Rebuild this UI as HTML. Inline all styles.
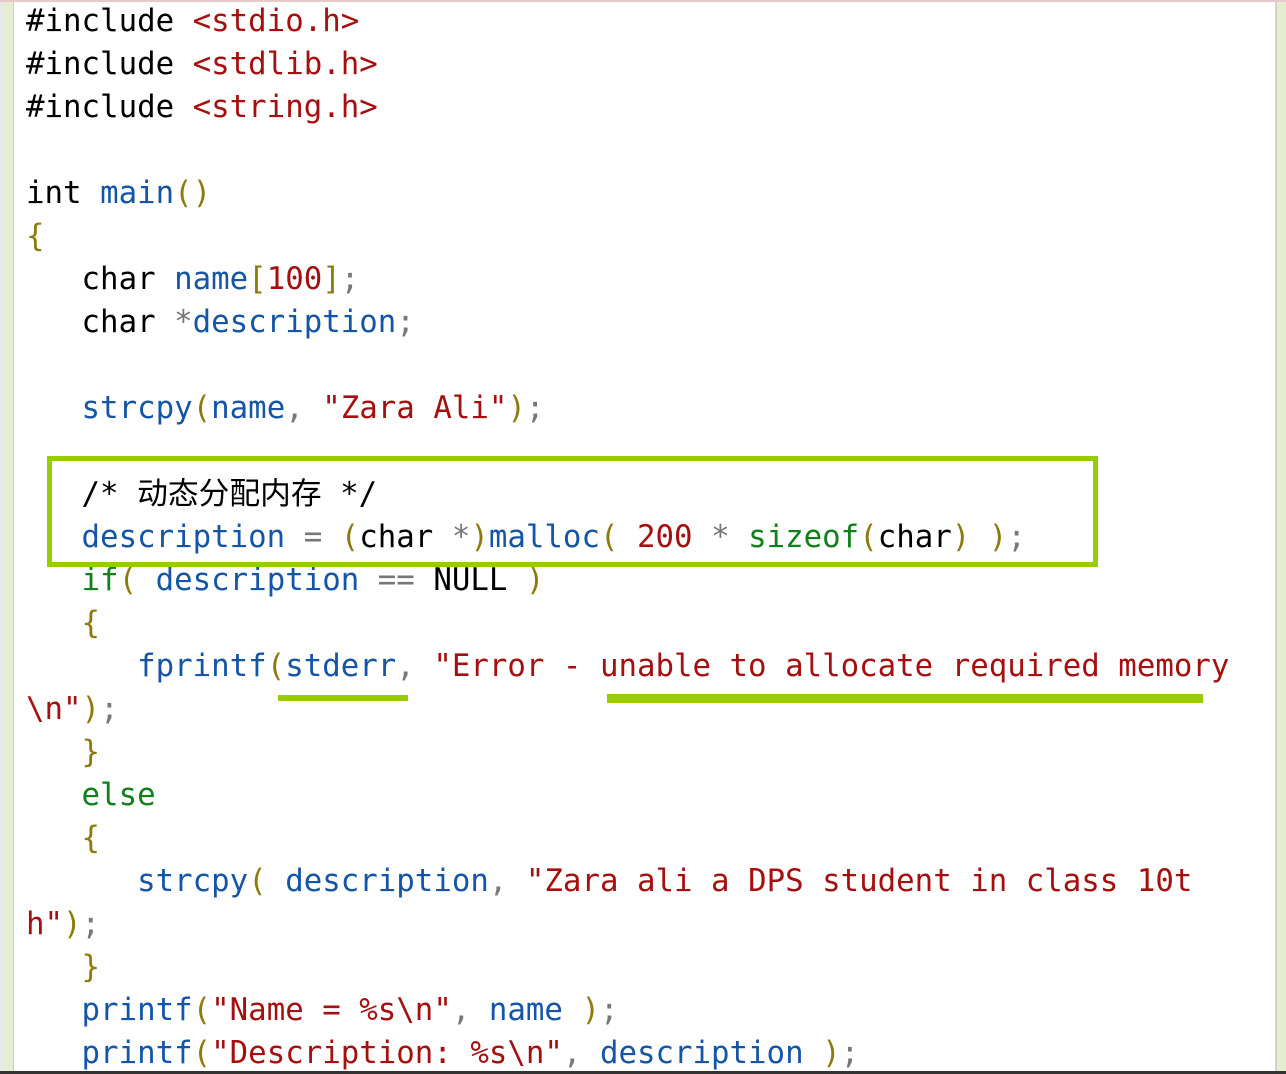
<!DOCTYPE html>
<html><head><meta charset="utf-8"><style>
html,body{margin:0;padding:0;width:1286px;height:1074px;overflow:hidden;background:#fff;position:relative}
.gl{position:absolute;left:0;top:0;width:3px;height:1074px;background:#e8e8e8}
.g{position:absolute;left:3px;top:0;width:10px;height:1074px;background:#e6eed2;border-right:1px solid #c8d0bc}
.gr{position:absolute;left:1275px;top:0;width:11px;height:1074px;background:#e4eecf;border-left:2px solid #cfd4c8}
.top{position:absolute;left:0;top:0;width:1286px;height:2px;background:#e8c8c8}
.bot{position:absolute;left:0;top:1071px;width:1286px;height:3px;background:#333}
pre{position:absolute;left:26px;top:0px;margin:0;font-family:"DejaVu Sans Mono","Noto Sans CJK SC",monospace;font-size:30.75px;line-height:43px;color:#000;white-space:pre}
.b{color:#1455a8}.o{color:#8c7a0c}.r{color:#a50f0f}.gn{color:#11801a}.gy{color:#777}
.box{position:absolute;left:47px;top:456px;width:1041px;height:101px;border:5px solid #99cc00}
.u{position:absolute;background:#99cc00}
</style></head><body>
<div class="gl"></div><div class="g"></div><div class="gr"></div><div class="top"></div>
<pre>#include <span class="r">&lt;stdio.h&gt;</span>
#include <span class="r">&lt;stdlib.h&gt;</span>
#include <span class="r">&lt;string.h&gt;</span>

int <span class="b">main</span><span class="o">()</span>
<span class="o">{</span>
   char <span class="b">name</span><span class="o">[</span><span class="r">100</span><span class="o">]</span><span class="gy">;</span>
   char <span class="gy">*</span><span class="b">description</span><span class="gy">;</span>

   <span class="b">strcpy</span><span class="o">(</span><span class="b">name</span><span class="gy">,</span> <span class="r">"Zara Ali"</span><span class="o">)</span><span class="gy">;</span>

   /* 动态分配内存 */
   <span class="b">description</span> <span class="gy">=</span> <span class="o">(</span>char <span class="gy">*</span><span class="o">)</span><span class="b">malloc</span><span class="o">(</span> <span class="r">200</span> <span class="gy">*</span> <span class="gn">sizeof</span><span class="o">(</span>char<span class="o">)</span> <span class="o">)</span><span class="gy">;</span>
   <span class="gn">if</span><span class="o">(</span> <span class="b">description</span> <span class="gy">==</span> NULL <span class="o">)</span>
   <span class="o">{</span>
      <span class="b">fprintf</span><span class="o">(</span><span class="b">stderr</span><span class="gy">,</span> <span class="r">"Error - unable to allocate required memory</span>
<span class="r">\n"</span><span class="o">)</span><span class="gy">;</span>
   <span class="o">}</span>
   <span class="gn">else</span>
   <span class="o">{</span>
      <span class="b">strcpy</span><span class="o">(</span> <span class="b">description</span><span class="gy">,</span> <span class="r">"Zara ali a DPS student in class 10t</span>
<span class="r">h"</span><span class="o">)</span><span class="gy">;</span>
   <span class="o">}</span>
   <span class="b">printf</span><span class="o">(</span><span class="r">"Name = %s\n"</span><span class="gy">,</span> <span class="b">name</span> <span class="o">)</span><span class="gy">;</span>
   <span class="b">printf</span><span class="o">(</span><span class="r">"Description: %s\n"</span><span class="gy">,</span> <span class="b">description</span> <span class="o">)</span><span class="gy">;</span>
</pre>
<div class="box"></div>
<div class="u" style="left:278px;top:695px;width:130px;height:6px"></div>
<div class="u" style="left:607px;top:694px;width:596px;height:9px"></div>
<div class="bot"></div>
</body></html>
